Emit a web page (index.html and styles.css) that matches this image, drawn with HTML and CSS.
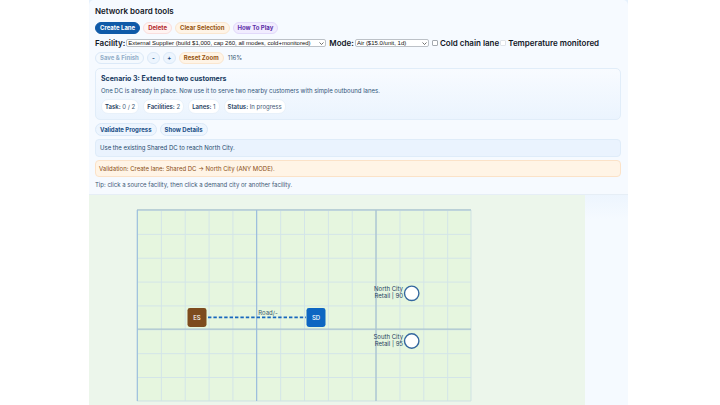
FILE: index.html
```html
<!DOCTYPE html>
<html lang="en">

<head>
    <meta charset="UTF-8">
    <meta name="viewport" content="width=device-width, initial-scale=1.0">
    <title>Network board</title>
    <link rel="stylesheet" href="styles.css">
</head>

<body>
    <main class="page">
        <section class="tools">
            <h2 class="tools-title">Network board tools</h2>
            <div class="row">
                <button class="btn primary" type="button">Create Lane</button>
                <button class="btn danger" type="button">Delete</button>
                <button class="btn warn" type="button">Clear Selection</button>
                <button class="btn help" type="button">How To Play</button>
            </div>
            <form class="fields">
                <label for="facility">Facility:</label>
                <select class="select facility" id="facility">
                    <option>External Supplier (build $1,000, cap 260, all modes, cold+monitored)</option>
                </select>
                <label for="mode">Mode:</label>
                <select class="select mode" id="mode">
                    <option>Air ($15.0/unit, 1d)</option>
                </select>
                <input class="check" type="checkbox" id="cold">
                <label for="cold">Cold chain lane</label>
                <input class="check" type="checkbox" id="temp" disabled>
                <label for="temp">Temperature monitored</label>
            </form>
            <div class="row">
                <button class="btn" type="button" disabled>Save &amp; Finish</button>
                <button class="btn zoom" type="button">-</button>
                <button class="btn zoom" type="button">+</button>
                <button class="btn warn" type="button">Reset Zoom</button>
                <span class="zoom-value">116%</span>
            </div>
            <div class="progress">
                <div class="scenario">
                    <h3 class="scenario-title">Scenario 3: Extend to two customers</h3>
                    <p class="scenario-text">One DC is already in place. Now use it to serve two nearby customers with simple outbound lanes.</p>
                    <div class="stats">
                        <span class="pill"><b>Task:</b> 0 / 2</span>
                        <span class="pill"><b>Facilities:</b> 2</span>
                        <span class="pill"><b>Lanes:</b> 1</span>
                        <span class="pill"><b>Status:</b> In progress</span>
                    </div>
                </div>
                <div class="row">
                    <button class="btn check-btn" type="button">Validate Progress</button>
                    <button class="btn check-btn" type="button">Show Details</button>
                </div>
                <p class="note hint">Use the existing Shared DC to reach North City.</p>
                <p class="note validation">Validation: Create lane: Shared DC → North City (ANY MODE).</p>
                <p class="tip">Tip: click a source facility, then click a demand city or another facility.</p>
            </div>
        </section>
        <section class="board">
            <svg class="map" width="496" height="210" viewBox="0 0 496 210">
                <defs>
                    <pattern id="cells" x="48" y="15" width="23.86" height="23.86" patternUnits="userSpaceOnUse">
                        <path d="M0 0H23.86M0 0V23.86" fill="none" stroke="#d3e5e8" stroke-width="2" />
                    </pattern>
                </defs>
                <rect x="48" y="15" width="334" height="191" fill="#e6f6df" />
                <rect x="48" y="15" width="334" height="191" fill="url(#cells)" />
                <path d="M382 15V206M48 206H382" stroke="#cfe2e4" />
                <path d="M48 14.8H382M48 134.2H382M287 15V206" stroke="#a9c4cf" stroke-width="1.3" />
                <path d="M48.3 15V206M167.6 15V206" stroke="#9dbfdc" stroke-width="1.2" />
                <path d="M119 122.4H217" stroke="#1767bd" stroke-width="1.6" stroke-dasharray="3.4 2" />
                <text class="lane-label" x="179" y="120" text-anchor="middle">Road/-</text>
                <rect x="98.5" y="113" width="19" height="19" rx="2.4" fill="#7d4b1e" />
                <rect x="217.5" y="113" width="19" height="19" rx="2.4" fill="#0d66c2" />
                <text class="node-label" x="108" y="124.5" text-anchor="middle">ES</text>
                <text class="node-label" x="227" y="124.5" text-anchor="middle">SD</text>
                <circle cx="322.7" cy="98.3" r="7.2" fill="#fff" stroke="#34679f" stroke-width="1.4" />
                <circle cx="322.7" cy="146" r="7.2" fill="#fff" stroke="#34679f" stroke-width="1.4" />
                <text class="city" x="314" y="96" text-anchor="end">North City</text>
                <text class="city" x="314" y="103" text-anchor="end">Retail | 90</text>
                <text class="city" x="314" y="144" text-anchor="end">South City</text>
                <text class="city" x="314" y="151" text-anchor="end">Retail | 95</text>
            </svg>
        </section>
    </main>
</body>

</html>
```
FILE: styles.css
```css
* {
    box-sizing: border-box;
}

body {
    margin: 0;
    padding: 0 92px 0 89px;
    background: #fff;
    color: #12171f;
    font: 6px/8px Inter, sans-serif;
    overflow: hidden;
}

h2,
h3,
p {
    margin: 0;
}

.page {
    background: #e6f1fc;
}

.tools {
    display: flex;
    flex-direction: column;
    gap: 4px;
    padding: 6px 7px 5px 6px;
    background: #f6faff;
    border-bottom: 1px solid #e6eef6;
    border-radius: 5px 5px 0 0;
}

.tools-title {
    margin-bottom: 1px;
    font-size: 8px;
    font-weight: 600;
    line-height: 11px;
}

.row {
    display: flex;
    align-items: center;
    gap: 3px;
}

.btn {
    height: 12px;
    padding: 0 4px;
    border: 1px solid #dbe9f8;
    border-radius: 6px;
    background: #edf5fe;
    color: #1a4f86;
    font: 700 6px/8px Inter, sans-serif;
    white-space: nowrap;
}

.btn:disabled {
    background: #f4f9fe;
    color: #93afca;
}

.primary {
    border-color: #0f5aa8;
    background: #0f5aa8;
    color: #fff;
}

.danger {
    border-color: #f9dedd;
    background: #fff3f1;
    color: #b3282d;
}

.warn {
    border-color: #fae6cf;
    background: #fff4e6;
    color: #965510;
}

.help {
    border-color: #e2d9fa;
    background: #f1ecfe;
    color: #5b2fa8;
}

.zoom {
    width: 13px;
    padding: 0;
}

.check-btn {
    height: 13px;
    border-radius: 7px;
}

.zoom-value {
    margin-left: 1px;
    color: #3c5875;
}

.fields {
    display: flex;
    align-items: center;
    gap: 1px;
    height: 10px;
    font-size: 8px;
    font-weight: 600;
    white-space: nowrap;
}

.select {
    height: 8px;
    margin-right: 2px;
    padding: 0 9px 0 1px;
    appearance: none;
    border: 1px solid #bcc1c7;
    border-radius: 2px;
    background: #fff url("data:image/svg+xml,%3Csvg xmlns='http://www.w3.org/2000/svg' viewBox='0 0 5 3'%3E%3Cpath d='M.5 .5L2.5 2.5L4.5 .5' fill='none' stroke='%23333' stroke-width='.7'/%3E%3C/svg%3E") no-repeat right 1px center / 5px 3px;
    color: #111;
    font: 6px/6px "Liberation Sans", sans-serif;
}

.facility {
    width: 200px;
}

.mode {
    width: 74px;
}

.check {
    width: 6px;
    height: 6px;
    margin: 0 1px 0 0;
    appearance: none;
    border: 1px solid #a5aab0;
    border-radius: 1px;
    background: #fff;
}

.check:disabled {
    border-color: #dfe3e8;
}

.progress {
    display: flex;
    flex-direction: column;
    gap: 3px;
}

.scenario {
    padding: 5px;
    border: 1px solid #e1edf9;
    border-radius: 5px;
    background: linear-gradient(#f8fbff, #ebf4fe);
}

.scenario-title {
    color: #183b61;
    font-size: 7px;
    line-height: 9px;
}

.scenario-text {
    margin: 4px 0;
    color: #315579;
}

.stats {
    display: flex;
    gap: 4px;
}

.pill {
    padding: 2px 3px;
    border: 1px solid #e8f1fa;
    border-radius: 7px;
    background: #fff;
    color: #3c5875;
    line-height: 9px;
}

.pill b {
    color: #1c3d60;
    font-weight: 600;
}

.note {
    padding: 4px;
    border: 1px solid #dfecf9;
    border-radius: 4px;
}

.hint {
    background: #eaf3fe;
    color: #24486c;
}

.validation {
    padding: 3px;
    border-color: #fbe2c8;
    background: #fff4e6;
    color: #8a4e14;
    line-height: 9px;
}

.tip {
    color: #3c5875;
    line-height: 9px;
}

.board {
    background: linear-gradient(#edf5fe, #f5faff 24px);
}

.map {
    display: block;
    background: #ecf6eb;
}

.lane-label {
    fill: #38566c;
    font-size: 6px;
}

.node-label {
    fill: #fff;
    font-size: 6px;
    font-weight: 500;
}

.city {
    fill: #24415e;
    font-size: 6px;
}
```
